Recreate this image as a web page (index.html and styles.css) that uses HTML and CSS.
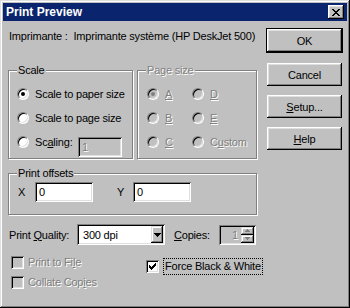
FILE: index.html
```html
<!DOCTYPE html>
<html>
<head>
<meta charset="utf-8">
<title>Print Preview</title>
<link rel="stylesheet" href="styles.css">
</head>
<body>
<div class="window">
  <div class="titlebar">
    <span class="title">Print Preview</span>
    <span class="close"><svg width="8" height="7" viewBox="0 0 8 7" shape-rendering="crispEdges"><path d="M0 0h2v1h-2z M6 0h2v1h-2z M1 1h2v1h-2z M5 1h2v1h-2z M2 2h4v1h-4z M3 3h2v1h-2z M2 4h4v1h-4z M1 5h2v1h-2z M5 5h2v1h-2z M0 6h2v1h-2z M6 6h2v1h-2z" fill="#000"/></svg></span>
  </div>
  <div class="content">
    <div class="main">
      <div class="printer">Imprimante :&nbsp; Imprimante système (HP DeskJet 500)</div>
      <div class="groups">
        <div class="group scale">
          <span class="legend">Scale</span>
          <div class="row"><span class="radio checked"></span><span>Scale to paper size</span></div>
          <div class="row"><span class="radio"></span><span>Scale to page size</span></div>
          <div class="row"><span class="radio"></span><span class="scaling-label">Sc<u>a</u>ling:</span><span class="field disabled scaling-input">1</span></div>
        </div>
        <div class="group pagesize">
          <span class="legend dis">Page size</span>
          <div class="pgrid">
            <div class="row"><span class="radio off checked"></span><span class="dis"><u>A</u></span></div>
            <div class="row"><span class="radio off"></span><span class="dis"><u>D</u></span></div>
            <div class="row"><span class="radio off"></span><span class="dis"><u>B</u></span></div>
            <div class="row"><span class="radio off"></span><span class="dis"><u>E</u></span></div>
            <div class="row"><span class="radio off"></span><span class="dis"><u>C</u></span></div>
            <div class="row"><span class="radio off"></span><span class="dis">C<u>u</u>stom</span></div>
          </div>
        </div>
      </div>
      <div class="group offsets">
        <span class="legend">Print offsets</span>
        <div class="offrow">
          <span class="xlabel">X</span><span class="field off-input">0</span>
          <span class="ylabel">Y</span><span class="field off-input">0</span>
        </div>
      </div>
      <div class="quality">
        <span class="qlabel">Print <u>Q</u>uality:</span>
        <span class="combo"><span class="combo-text">300 dpi</span><span class="combo-btn"><svg width="7" height="4" viewBox="0 0 7 4" shape-rendering="crispEdges"><path d="M0 0h7v1h-7z M1 1h5v1h-5z M2 2h3v1h-3z M3 3h1v1h-1z" fill="#000"/></svg></span></span>
        <span class="clabel"><u>C</u>opies:</span>
        <span class="spin"><span class="spin-text">1</span><span class="spin-btns"><span class="spin-btn"><svg width="5" height="3" viewBox="0 0 5 3" shape-rendering="crispEdges"><path d="M2 0h1v1h-1z M1 1h3v1h-3z M0 2h5v1h-5z" fill="#808080"/></svg></span><span class="spin-btn"><svg width="5" height="3" viewBox="0 0 5 3" shape-rendering="crispEdges"><path d="M0 0h5v1h-5z M1 1h3v1h-3z M2 2h1v1h-1z" fill="#808080"/></svg></span></span></span>
      </div>
      <div class="checks">
        <div class="checks-left">
          <div class="crow"><span class="check off"></span><span class="dis">Print to Fi<u>l</u>e</span></div>
          <div class="crow"><span class="check off"></span><span class="dis">Collate Cop<u>i</u>es</span></div>
        </div>
        <div class="checks-right">
          <div class="crow"><span class="check"><svg width="7" height="7" viewBox="0 0 7 7" shape-rendering="crispEdges"><path d="M6 0h1v1h-1z M5 1h2v1h-2z M0 2h1v1h-1z M4 2h3v1h-3z M0 3h2v1h-2z M3 3h3v1h-3z M0 4h5v1h-5z M1 5h3v1h-3z M2 6h1v1h-1z" fill="#000"/></svg></span><span class="focus">Force Black &amp; White</span></div>
        </div>
      </div>
    </div>
    <div class="buttons">
      <div class="default"><span class="btn">OK</span></div>
      <span class="btn std">Cancel</span>
      <span class="btn std"><u>S</u>etup...</span>
      <span class="btn std"><u>H</u>elp</span>
    </div>
  </div>
</div>
</body>
</html>
```
FILE: styles.css
```css
* { box-sizing: border-box; }
html, body { margin: 0; padding: 0; }
body {
  width: 350px;
  height: 308px;
  overflow: hidden;
  background: #c0c0c0;
  font-family: "Liberation Sans", Arial, sans-serif;
  font-size: 11px;
  letter-spacing: -0.2px;
  color: #000;
}
u { text-decoration: underline; text-underline-offset: 1px; }

.window {
  width: 350px;
  height: 308px;
  padding: 3px;
  background: #c0c0c0;
  display: flex;
  flex-direction: column;
  box-shadow: inset -1px -1px #000, inset 1px 1px #dfdfdf, inset -2px -2px #808080, inset 2px 2px #fff;
}

.titlebar {
  height: 18px;
  flex: none;
  background: #0a246e;
  color: #fff;
  display: flex;
  align-items: center;
  justify-content: space-between;
  padding: 0 3px 0 3px;
}
.title { font-weight: bold; font-size: 12px; line-height: 18px; letter-spacing: 0; }
.close {
  width: 16px;
  height: 14px;
  background: #c0c0c0;
  display: flex;
  align-items: center;
  justify-content: center;
  box-shadow: inset -1px -1px #000, inset 1px 1px #fff, inset -2px -2px #808080, inset 2px 2px #dfdfdf;
}
.close svg { display: block; }

.content {
  flex: 1;
  display: flex;
  gap: 9px;
  padding: 7px 0 0 5px;
}
.main { width: 249px; flex: none; display: flex; flex-direction: column; }

.printer { margin-top: 2px; line-height: 13px; height: 13px; padding-left: 1px; white-space: nowrap; }

.groups { margin-top: 27px; display: flex; gap: 4px; }
.group {
  position: relative;
  flex: none;
  border: 1px solid #808080;
  box-shadow: inset 1px 1px #fff, 1px 1px #fff;
}
.legend {
  position: absolute;
  top: -7px;
  left: 8px;
  padding: 0 1px;
  line-height: 13px;
  background: #c0c0c0;
  white-space: nowrap;
}
.dis { color: #808080; text-shadow: 1px 1px 0 #fff; }

.scale { width: 125px; height: 89px; padding: 11px 0 0 8px; }
.pagesize { width: 120px; height: 89px; padding: 11px 0 0 9px; }
.pgrid { display: grid; grid-template-columns: 45px auto; }

.row { display: flex; align-items: center; height: 24px; white-space: nowrap; }
.radio {
  flex: none;
  width: 12px;
  height: 12px;
  margin-right: 6px;
  border-radius: 50%;
  border: 1px solid;
  border-color: #808080 #fff #fff #808080;
  background: #fff;
  box-shadow: inset 1px 1px #000, inset -1px -1px #dfdfdf;
  display: flex;
  align-items: center;
  justify-content: center;
}
.radio.checked::after {
  content: "";
  width: 4px;
  height: 4px;
  border-radius: 50%;
  background: #000;
}
.radio.off { background: #c0c0c0; }
.radio.off.checked::after { background: #808080; }

.field {
  display: flex;
  align-items: center;
  height: 20px;
  padding-left: 4px;
  background: #fff;
  box-shadow: inset 1px 1px #808080, inset -1px -1px #fff, inset 2px 2px #000, inset -2px -2px #dfdfdf;
}
.field.disabled { background: #c0c0c0; color: #808080; text-shadow: 1px 1px 0 #fff; }
.scaling-label { width: 43px; flex: none; }
.scaling-input { width: 44px; flex: none; margin-top: 10px; }

.offsets { margin-top: 14px; width: 249px; height: 42px; padding: 8px 0 0 9px; }
.offrow { display: flex; align-items: center; }
.xlabel { width: 17px; flex: none; }
.off-input { width: 58px; flex: none; }
.ylabel { width: 16px; flex: none; margin-left: 24px; }

.quality { margin-top: 9px; display: flex; align-items: center; height: 21px; white-space: nowrap; }
.qlabel { width: 69px; flex: none; padding-left: 1px; }
.combo {
  width: 88px;
  height: 21px;
  flex: none;
  display: flex;
  align-items: center;
  justify-content: space-between;
  padding: 2px;
  background: #fff;
  box-shadow: inset 1px 1px #808080, inset -1px -1px #fff, inset 2px 2px #000, inset -2px -2px #dfdfdf;
}
.combo-text { padding-left: 4px; }
.combo-btn {
  width: 12px;
  height: 17px;
  background: #c0c0c0;
  display: flex;
  align-items: center;
  justify-content: center;
  box-shadow: inset -1px -1px #000, inset 1px 1px #dfdfdf, inset -2px -2px #808080, inset 2px 2px #fff;
}
.combo-btn svg, .spin-btn svg, .check svg { display: block; }
.clabel { width: 45px; flex: none; margin-left: 9px; }
.spin {
  width: 37px;
  height: 20px;
  flex: none;
  padding: 2px;
  display: flex;
  align-items: center;
  justify-content: flex-end;
  background: #c0c0c0;
  box-shadow: inset 1px 1px #808080, inset -1px -1px #fff, inset 2px 2px #000, inset -2px -2px #dfdfdf;
}
.spin-text { color: #808080; text-shadow: 1px 1px 0 #fff; margin-right: 3px; }
.spin-btns { display: flex; flex-direction: column; width: 13px; height: 16px; }
.spin-btn {
  flex: 1;
  display: flex;
  align-items: center;
  justify-content: center;
  box-shadow: inset -1px -1px #000, inset 1px 1px #dfdfdf, inset -2px -2px #808080, inset 2px 2px #fff;
}

.checks { margin-top: 7px; display: flex; }
.checks-left { width: 138px; flex: none; padding-left: 3px; }
.checks-right { margin-top: 4px; flex: none; }
.crow { display: flex; align-items: center; height: 20px; white-space: nowrap; }
.check {
  flex: none;
  width: 13px;
  height: 13px;
  margin-right: 4px;
  display: flex;
  align-items: center;
  justify-content: center;
  background: #fff;
  box-shadow: inset 1px 1px #808080, inset -1px -1px #fff, inset 2px 2px #000, inset -2px -2px #dfdfdf;
}
.check.off { background: #c0c0c0; }
.focus { border: 1px dotted #000; padding: 1px 1px; line-height: 13px; }

.buttons { width: 77px; flex: none; display: flex; flex-direction: column; align-items: flex-start; }
.default { border: 1px solid #000; width: 77px; height: 25px; }
.btn {
  width: 75px;
  height: 23px;
  display: flex;
  align-items: center;
  justify-content: center;
  background: #c0c0c0;
  box-shadow: inset -1px -1px #000, inset 1px 1px #fff, inset -2px -2px #808080, inset 2px 2px #dfdfdf;
}
.std { margin-left: 1px; margin-top: 9px; }
.default + .std { margin-top: 10px; }
```
